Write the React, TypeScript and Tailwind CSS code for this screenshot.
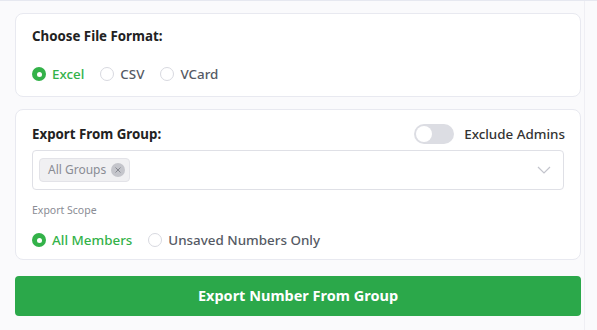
import React from "react";

const font = { fontFamily: '"Noto Sans", "Open Sans", Arial, sans-serif' };

const Radio: React.FC<{ label: string; checked?: boolean }> = ({ label, checked }) => (
  <label className="flex items-center gap-[6px]">
    {checked ? (
      <span className="w-[14px] h-[14px] rounded-full bg-[#33b249] flex items-center justify-center">
        <span className="w-[5px] h-[5px] rounded-full bg-white" />
      </span>
    ) : (
      <span className="w-[14px] h-[14px] rounded-full border border-[#d8d9e0] bg-white" />
    )}
    <span className={checked ? "text-[#33b249] font-medium" : "text-[#555a64] font-medium"}>{label}</span>
  </label>
);

const App: React.FC = () => {
  return (
    <div className="w-[597px] h-[330px] bg-[#fafafc] border-t border-[#e6e8f0] overflow-hidden" style={font}>
      <div className="w-[585px] h-full border-r border-[#efeff4] pl-[15px] pt-[12px]">
        {/* file format */}
        <div className="w-[566px] h-[84px] bg-white border border-[#e8e9f0] rounded-[8px] px-[16px] pt-[12px]">
          <p className="text-[13.3px] leading-[20px] font-bold text-[#222]">Choose File Format:</p>
          <div className="flex items-center gap-[16px] mt-[18px] text-[13.4px]">
            <Radio label="Excel" checked />
            <Radio label="CSV" />
            <Radio label="VCard" />
          </div>
        </div>

        {/* group */}
        <div className="w-[566px] h-[151px] mt-[12px] bg-white border border-[#e8e9f0] rounded-[8px] px-[16px] pt-[13px]">
          <div className="flex items-center justify-between h-[22px]">
            <p className="text-[13.3px] font-bold text-[#222] mt-[2px]">Export From Group:</p>
            <div className="flex items-center gap-[10px] mr-[-1px]">
              <span className="w-[40px] h-[20px] rounded-full bg-[#dcdde3] flex items-center px-[2px]">
                <span className="w-[16px] h-[16px] rounded-full bg-white" />
              </span>
              <span className="text-[13.4px] font-medium text-[#333]">Exclude Admins</span>
            </div>
          </div>
          <div className="mt-[5px] h-[40px] border border-[#dfe0e6] rounded-[4px] flex items-center justify-between pl-[6px] pr-[12px]">
            <span className="flex items-center gap-[5px] h-[24px] bg-[#f0f0f2] border border-[#e3e3e8] rounded-[4px] pl-[8px] pr-[4px] text-[12px] text-[#8a8c94]">
              All Groups
              <span className="w-[14px] h-[14px] rounded-full bg-[#c4c5cb] flex items-center justify-center">
                <svg width="8" height="8" viewBox="0 0 8 8">
                  <path d="M1.5 1.5 L6.5 6.5 M6.5 1.5 L1.5 6.5" stroke="#85878f" strokeWidth="1" />
                </svg>
              </span>
            </span>
            <svg width="14" height="8" viewBox="0 0 14 8">
              <path d="M1 1 L7 7 L13 1" fill="none" stroke="#c3c4cc" strokeWidth="1.2" />
            </svg>
          </div>
          <p className="mt-[12px] text-[10.5px] leading-[16px] text-[#8a8c94]">Export Scope</p>
          <div className="flex items-center gap-[16px] mt-[12px] text-[13.4px]">
            <Radio label="All Members" checked />
            <Radio label="Unsaved Numbers Only" />
          </div>
        </div>

        <button className="w-[566px] h-[40px] mt-[16px] bg-[#2ba84a] rounded-[4px] text-white text-[14.5px] font-bold">
          Export Number From Group
        </button>
      </div>
    </div>
  );
};

export default App;
